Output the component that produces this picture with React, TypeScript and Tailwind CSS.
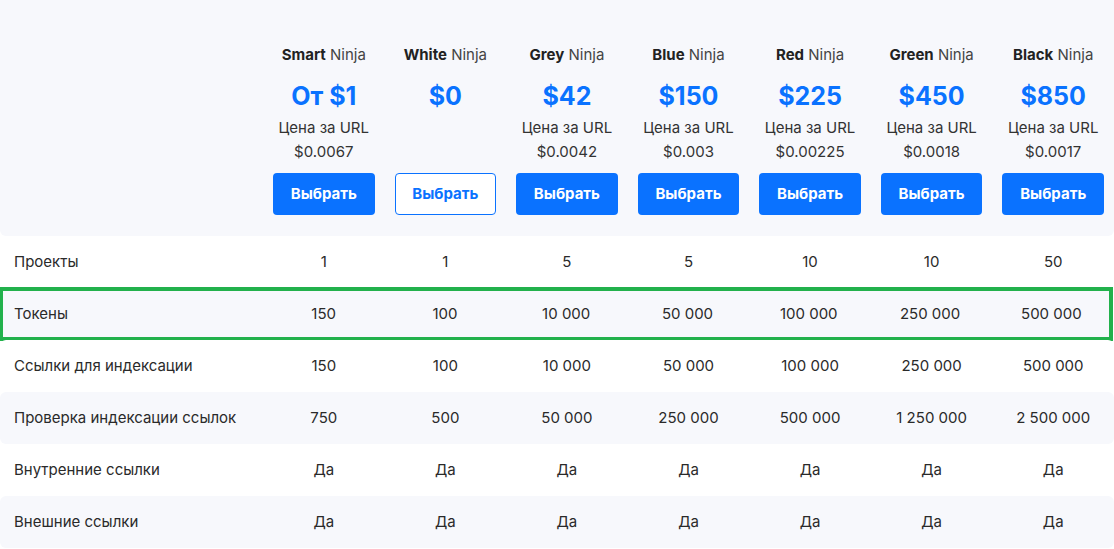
import React from "react";

type Plan = {
  name: string;
  price: string;
  perUrl?: string;
  outline?: boolean;
};

const plans: Plan[] = [
  { name: "Smart", price: "От $1", perUrl: "$0.0067" },
  { name: "White", price: "$0", outline: true },
  { name: "Grey", price: "$42", perUrl: "$0.0042" },
  { name: "Blue", price: "$150", perUrl: "$0.003" },
  { name: "Red", price: "$225", perUrl: "$0.00225" },
  { name: "Green", price: "$450", perUrl: "$0.0018" },
  { name: "Black", price: "$850", perUrl: "$0.0017" },
];

const rows: { label: string; values: string[]; gray?: boolean; highlight?: boolean }[] = [
  { label: "Проекты", values: ["1", "1", "5", "5", "10", "10", "50"] },
  {
    label: "Токены",
    values: ["150", "100", "10 000", "50 000", "100 000", "250 000", "500 000"],
    gray: true,
    highlight: true,
  },
  {
    label: "Ссылки для индексации",
    values: ["150", "100", "10 000", "50 000", "100 000", "250 000", "500 000"],
  },
  {
    label: "Проверка индексации ссылок",
    values: ["750", "500", "50 000", "250 000", "500 000", "1 250 000", "2 500 000"],
    gray: true,
  },
  { label: "Внутренние ссылки", values: ["Да", "Да", "Да", "Да", "Да", "Да", "Да"] },
  { label: "Внешние ссылки", values: ["Да", "Да", "Да", "Да", "Да", "Да", "Да"], gray: true },
];

function PlanHead({ plan }: { plan: Plan }) {
  return (
    <div className="flex flex-col items-center px-[10px]">
      <p className="text-[15px] leading-[20px] text-[#222]">
        <span className="font-bold">{plan.name}</span>{" "}
        <span className="text-[#444]">Ninja</span>
      </p>
      <p className="mt-[17px] text-[25px] leading-[28px] font-bold text-[#0a72ff]">
        {plan.price}
      </p>
      <div className="mt-[6px] h-[52px] text-[15px] leading-[24px] text-[#333] text-center">
        {plan.perUrl && (
          <>
            <p>Цена за URL</p>
            <p>{plan.perUrl}</p>
          </>
        )}
      </div>
      <button
        className={
          plan.outline
            ? "mt-[5px] w-full h-[42px] rounded-[4px] border border-[#0a72ff] bg-white text-[#0a72ff] text-[15px] font-bold"
            : "mt-[5px] w-full h-[42px] rounded-[4px] bg-[#0a72ff] text-white text-[15px] font-bold"
        }
      >
        Выбрать
      </button>
    </div>
  );
}

export default function App() {
  return (
    <div
      className="w-[1114px] h-[549px] bg-white overflow-hidden"
      style={{ fontFamily: "Inter, 'Noto Sans', sans-serif" }}
    >
      <div className="h-[236px] bg-[#f7f8fc] rounded-b-[6px] grid grid-cols-[263px_repeat(7,1fr)] pt-[45px]">
        <div />
        {plans.map((p) => (
          <PlanHead key={p.name} plan={p} />
        ))}
      </div>
      <div className="flex flex-col">
        {rows.map((r) => (
          <div
            key={r.label}
            className={
              "h-[52px] grid grid-cols-[263px_repeat(7,1fr)] items-center text-[15px] text-[#2a2a2a] " +
              (r.gray ? "bg-[#f7f8fc] " : "bg-white ") +
              (r.highlight
                ? "outline-[4px] outline-[#22b14c] -outline-offset-[3px] mr-[2px]"
                : "rounded-[6px]")
            }
          >
            <div className="pl-[14px]">{r.label}</div>
            {r.values.map((v, i) => (
              <div key={i} className="text-center">
                {v}
              </div>
            ))}
          </div>
        ))}
      </div>
    </div>
  );
}
